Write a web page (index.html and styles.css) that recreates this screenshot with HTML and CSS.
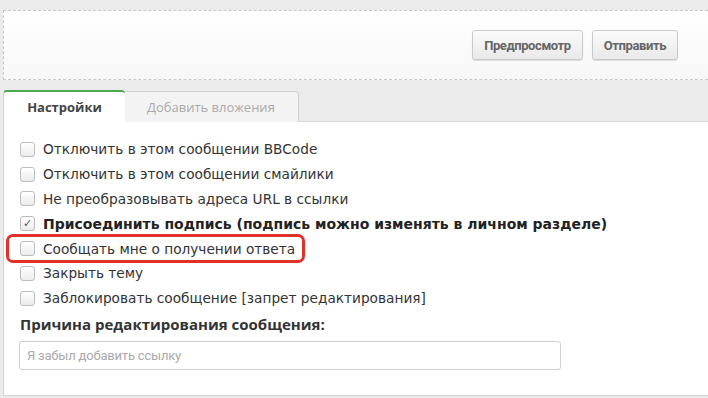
FILE: index.html
```html
<!DOCTYPE html>
<html>
	<head>
		<title>Ответ в теме</title>
		<link rel="stylesheet" href="styles.css">
	</head>
	<body>
		<div class="page">

			<div class="submit-bar">
				<button type="button" class="btn">Предпросмотр</button>
				<button type="button" class="btn">Отправить</button>
			</div>

			<div class="tabs">
				<div class="tab tab-active">Настройки</div>
				<div class="tab">Добавить вложения</div>
			</div>

			<div class="panel">
				<label class="opt"><span class="box"></span>Отключить в этом сообщении BBCode</label>
				<label class="opt"><span class="box"></span>Отключить в этом сообщении смайлики</label>
				<label class="opt"><span class="box"></span>Не преобразовывать адреса URL в ссылки</label>
				<label class="opt opt-bold"><span class="box box-checked">&#10003;</span>Присоединить подпись (подпись можно изменять в личном разделе)</label>
				<label class="opt"><span class="box"></span>Сообщать мне о получении ответа<span class="highlight"></span></label>
				<label class="opt"><span class="box"></span>Закрыть тему</label>
				<label class="opt"><span class="box"></span>Заблокировать сообщение [запрет редактирования]</label>

				<div class="reason-title">Причина редактирования сообщения:</div>
				<input class="reason" type="text" placeholder="Я забыл добавить ссылку">
			</div>

		</div>
	</body>
</html>
```

FILE: styles.css
```css
body {
	margin: 0;
	background: #ebebeb;
	overflow: hidden;
	font-family: "DejaVu Sans", Verdana, sans-serif;
}
.page {
	width: 730px;
	padding: 10px 0 0 3px;
}
.submit-bar {
	height: 68px;
	border: 1px dashed #c8c8c8;
	background: linear-gradient(#ffffff, #f7f7f7);
	display: flex;
	justify-content: flex-end;
	align-items: center;
	gap: 9px;
	padding-right: 54px;
}
.btn {
	height: 30px;
	padding: 0 11px;
	border: 1px solid #c9c9c9;
	border-radius: 3px;
	background: linear-gradient(#fbfbfb, #e9e9e9);
	box-shadow: 0 1px 1px rgba(0,0,0,0.12);
	font-family: Roboto, sans-serif;
	font-weight: bold;
	font-size: 13px;
	letter-spacing: -0.4px;
	color: #666;
}
.tabs {
	display: flex;
	margin-top: 10px;
	height: 32px;
}
.tab {
	font-family: "Open Sans", sans-serif;
	font-size: 13px;
	line-height: 30px;
	padding: 0 23px 0 22px;
	color: #aaa;
	background: #f3f3f3;
	border: 1px solid #cfcfcf;
	border-bottom: none;
	border-left: none;
	border-radius: 0 4px 0 0;
	margin-top: 1px;
}
.tab-active {
	width: 122px;
	box-sizing: border-box;
	padding: 0;
	text-align: center;
	margin-top: 0;
	height: 32px;
	background: #fff;
	color: #444;
	font-weight: bold;
	border: none;
	border-left: 1px solid #d3d3d3;
	border-top: 2px solid #4ca84c;
	border-radius: 4px 4px 0 0;
	position: relative;
	z-index: 1;
}
.panel {
	background: #fff;
	border-left: 1px solid #d3d3d3;
	border-bottom: 1px solid #d3d3d3;
	border-top: 1px solid #d9d9d9;
	margin-top: -1px;
	height: 258px;
	padding: 15px 0 0 16px;
}
.opt {
	display: flex;
	align-items: center;
	height: 24.8px;
	font-size: 13.7px;
	color: #333;
	position: relative;
	white-space: nowrap;
}
.opt-bold {
	font-weight: bold;
	font-size: 14px;
	color: #222;
}
.box {
	width: 13px;
	height: 13px;
	border: 1px solid #bdbdbd;
	border-radius: 3px;
	background: linear-gradient(#ffffff, #ececec);
	margin-right: 8px;
	font-size: 11px;
	line-height: 13px;
	text-align: center;
	color: #555;
	font-weight: normal;
	flex: none;
}
.highlight {
	position: absolute;
	left: -14px;
	top: -2px;
	width: 293px;
	height: 23px;
	border: 3px solid #e0312b;
	border-radius: 7px;
}
.reason-title {
	font-family: "Open Sans", sans-serif;
	font-weight: bold;
	font-size: 15px;
	color: #333;
	margin-top: 2px;
	line-height: 22px;
}
.reason {
	margin-top: 6px;
	width: 542px;
	height: 29px;
	box-sizing: border-box;
	border: 1px solid #d0d0d0;
	border-radius: 3px;
	padding: 0 7px;
	font-family: Roboto, sans-serif;
	font-size: 13px;
	letter-spacing: -0.2px;
	margin-left: -1px;
}
.reason::placeholder {
	color: #aaa;
}
```
